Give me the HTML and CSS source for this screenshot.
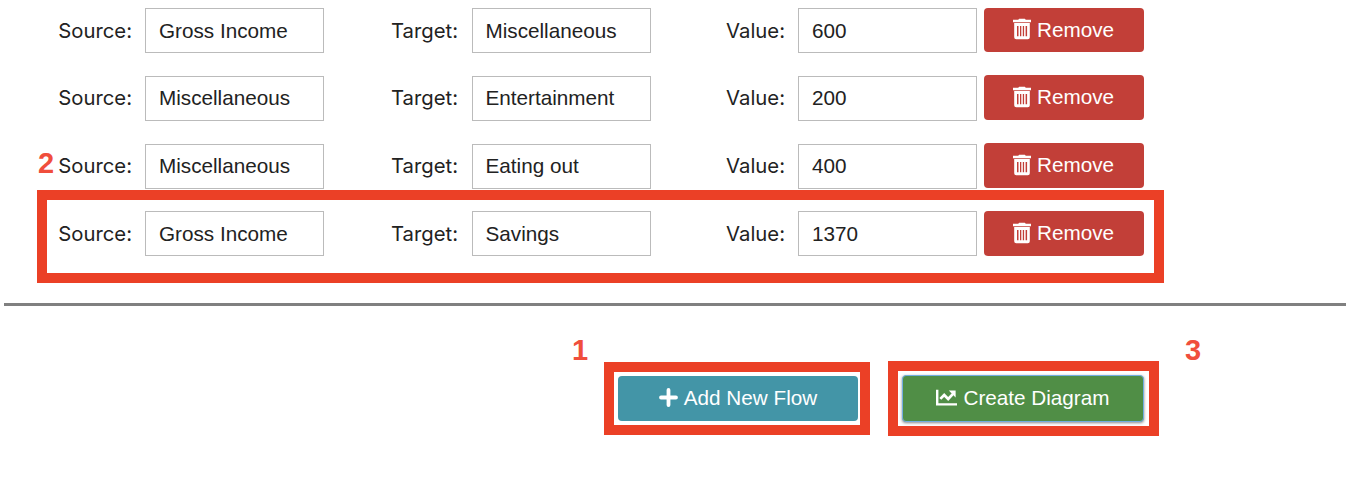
FILE: index.html
```html
<!DOCTYPE html>
<html lang="en">
<head>
<meta charset="utf-8">
<title>Flows</title>
<link rel="stylesheet" href="styles.css">
</head>
<body>
<svg class="defs" width="0" height="0" aria-hidden="true">
  <symbol id="trash" viewBox="0 0 18 22">
    <path fill="currentColor" fill-rule="evenodd" d="M0 1.8h5.2L6.2.8h5.6l1 1h5.2v2.4H0zM1.2 5h15.6v14.2a2 2 0 0 1-2 2H3.2a2 2 0 0 1-2-2zM4 8v10.2h1.5V8zM7 8v10.2h1.3V8zM9.8 8v10.2h1.3V8zM12.6 8v10.2h1.5V8z"/>
  </symbol>
</svg>
<main class="page">
  <section class="flows">
    <div class="flow first">
      <label class="label">Source:</label><div class="field">Gross Income</div>
      <label class="label">Target:</label><div class="field">Miscellaneous</div>
      <label class="label">Value:</label><div class="field">600</div>
      <button class="btn remove short"><svg class="trash"><use href="#trash"/></svg><span>Remove</span></button>
    </div>
    <div class="flow low">
      <label class="label">Source:</label><div class="field">Miscellaneous</div>
      <label class="label">Target:</label><div class="field">Entertainment</div>
      <label class="label">Value:</label><div class="field">200</div>
      <button class="btn remove"><svg class="trash"><use href="#trash"/></svg><span>Remove</span></button>
    </div>
    <div class="flow low">
      <label class="label">Source:</label><div class="field">Miscellaneous</div>
      <label class="label">Target:</label><div class="field">Eating out</div>
      <label class="label">Value:</label><div class="field">400</div>
      <button class="btn remove"><svg class="trash"><use href="#trash"/></svg><span>Remove</span></button>
    </div>
    <div class="flow">
      <label class="label">Source:</label><div class="field">Gross Income</div>
      <label class="label">Target:</label><div class="field">Savings</div>
      <label class="label">Value:</label><div class="field">1370</div>
      <button class="btn remove"><svg class="trash"><use href="#trash"/></svg><span>Remove</span></button>
    </div>
  </section>
  <hr class="rule">
  <section class="actions">
    <button class="btn add"><svg class="plus" viewBox="0 0 19 19"><path d="M9.5 2v15M2 9.5h15" stroke="currentColor" stroke-width="3.8" stroke-linecap="round"/></svg><span>Add New Flow</span></button>
    <button class="btn create"><svg class="chart" viewBox="0 0 22 17"><path d="M1.2.8v14.6H21" fill="none" stroke="currentColor" stroke-width="2.4"/><path d="M4.3 9.9 8.2 6l4 4 4.8-5.1" fill="none" stroke="currentColor" stroke-width="2.7"/><path d="M12.8 1.6h6.8V8.4z" fill="currentColor"/></svg><span>Create Diagram</span></button>
  </section>
  <div class="frame frame-row"></div>
  <div class="frame frame-add"></div>
  <div class="frame frame-create"></div>
  <span class="step step-one">1</span>
  <span class="step step-two">2</span>
  <span class="step step-three">3</span>
</main>
</body>
</html>
```
FILE: styles.css
```css
* { box-sizing: border-box; }
body { margin: 0; background: #fff; color: #222; font-family: "Liberation Sans", Arial, sans-serif; font-size: 20.7px; }
.defs { position: absolute; }
.page { position: relative; height: 482px; overflow: hidden; }

.flows { display: flex; flex-direction: column; gap: 23px; padding-top: 7px; }
.flow { display: grid; grid-template-columns: 145px 179px 148px 179px 147px 179px 167px; height: 45px; }
.flow.first { margin-top: 1px; margin-bottom: -1px; }
.label { padding-right: 13px; font-family: Inter, "Liberation Sans", sans-serif; font-size: 20.3px; line-height: 45px; text-align: right; white-space: nowrap; }
.label:nth-of-type(2) { padding-right: 14px; }
.field { height: 45px; border: 1px solid #bbb; line-height: 43px; padding-left: 13px; white-space: nowrap; }
.field:nth-of-type(2) { padding-left: 12.5px; }
.low .field { margin-top: 1px; line-height: 41px; }

.btn { display: flex; align-items: center; justify-content: center; height: 45px; padding: 0; border: 0; border-radius: 4px; color: #fff; font: inherit; line-height: 24px; white-space: nowrap; }
.remove { margin-left: 7px; padding: 0 1px 1px 0; background: #c23f38; gap: 6px; }
.remove.short { height: 44px; }
.trash { width: 18px; height: 22px; margin-top: -1px; }

.rule { margin: 47px 0 0 4px; border: 0; height: 3px; background: #808080; }

.actions { display: flex; gap: 44px; padding: 70px 0 0 618px; }
.add { width: 240px; padding: 0 0 2px; background: #4395a7; gap: 6px; }
.plus { width: 19px; height: 19px; }
.create { width: 242px; height: 47px; margin-top: -1px; padding: 0 0 2px; border: 1px solid #72aee0; background: #508e46; gap: 5px; box-shadow: 0 1px 3px #888; }
.chart { width: 22px; height: 17px; }

.frame { position: absolute; border: 10px solid #eb4026; }
.frame-row { left: 37px; top: 190px; width: 1127px; height: 93px; }
.frame-add { left: 604px; top: 362px; width: 266px; height: 73px; }
.frame-create { left: 888px; top: 361px; width: 271px; height: 75px; }

.step { position: absolute; color: #f04e3c; font-size: 29px; font-weight: bold; line-height: 32px; }
.step-one { left: 572px; top: 334px; }
.step-two { left: 38px; top: 147px; }
.step-three { left: 1185px; top: 334px; }
```
